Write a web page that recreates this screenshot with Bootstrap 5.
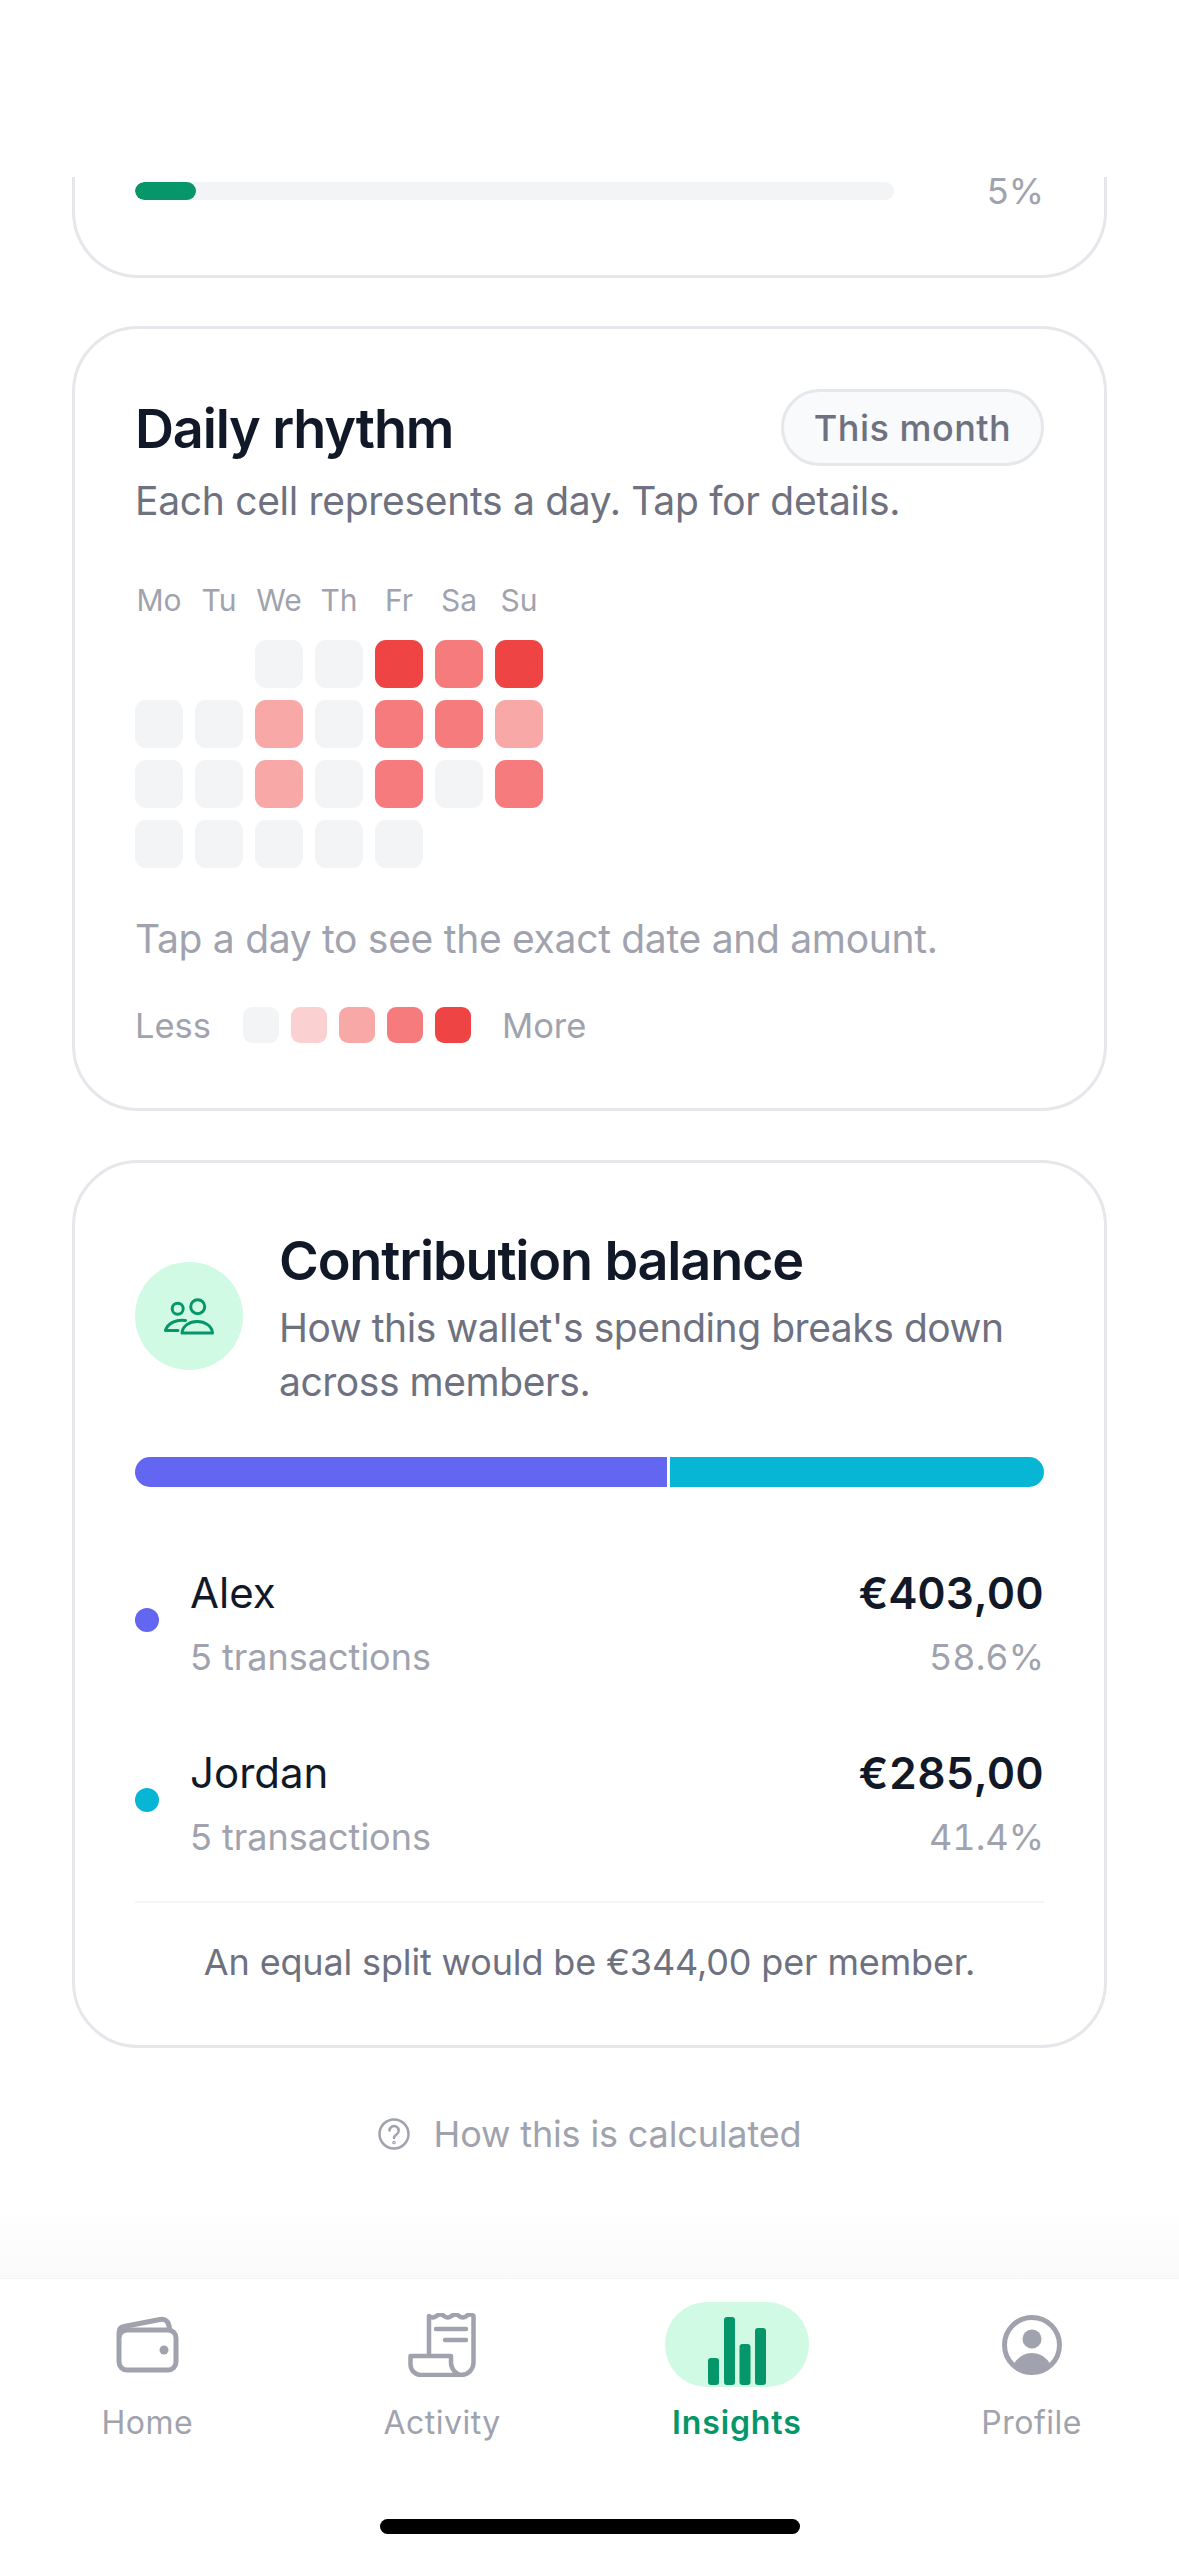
<!DOCTYPE html>
<html lang="en">
<head>
  <meta charset="UTF-8" />
  <meta name="viewport" content="width=device-width, initial-scale=1.0" />
  <title>Insights</title>
  <link href="https://cdn.jsdelivr.net/npm/bootstrap@5.3.0/dist/css/bootstrap.min.css" rel="stylesheet" />
  <style>
    body { font-family: Inter, "Noto Sans", sans-serif; background: #fff; color: #111827; }
    .app-shell { width: 1179px; height: 2556px; overflow: hidden; }
    .top-space { height: 177px; flex: none; }
    .scroll-area { height: 2101px; flex: none; padding: 0 72px; position: relative; }
    .scroll-fade { position: absolute; left: 0; right: 0; bottom: 0; height: 70px; background: linear-gradient(to bottom, rgba(249,250,251,0), #fafafa); }

    .panel { border: 3px solid #e5e7eb; border-radius: 66px; background: #fff; }
    .panel-cut { border-top: 0; border-radius: 0 0 66px 66px; padding: 0 60px; height: 101px; margin-bottom: 48px; }
    .panel-daily { height: 785px; padding: 60px 60px 0; margin-bottom: 49px; }
    .panel-balance { height: 888px; padding: 60px 60px 0; }

    .meter { height: 18px; width: 759px; margin-top: 5px; background: #f3f4f6; border-radius: 9px; overflow: hidden; }
    .meter-fill { height: 100%; background: #059669; border-radius: 9px; }
    .meter-pct { font-size: 36px; line-height: 28px; height: 28px; color: #a0a3ad; }

    .panel-title { font-size: 54px; line-height: 72px; font-weight: 600; letter-spacing: -1.150px; color: #111827; margin: 2px 0 0; }
    .panel-sub { font-size: 39px; line-height: 54px; color: #6e7180; letter-spacing: -.45px; margin: 0; }
    .panel-daily .panel-sub { letter-spacing: -.3px; }
    .range-pill { height: 77px; width: 263px; border: 3px solid #e5e7eb; border-radius: 39px; background: #f9fafb; color: #6e7180; font-size: 36px; font-weight: 500; letter-spacing: .5px; }

    .heat-grid { display: grid; grid-template-columns: repeat(7, 48px); gap: 12px; }
    .heat-days { display: grid; grid-template-columns: repeat(7, 48px); column-gap: 12px; margin-top: 54px; margin-bottom: 22px; }
    .heat-days span { font-size: 30px; line-height: 36px; color: #a0a3ad; text-align: center; }
    .cell { height: 48px; border-radius: 11px; }
    .swatch { width: 36px; height: 36px; border-radius: 9px; }
    .lvl0 { background: #f3f4f6; }
    .lvl1 { background: #fbd0d0; }
    .lvl2 { background: #f9a8a8; }
    .lvl3 { background: #f67b7d; }
    .lvl4 { background: #ef4444; }
    .tap-hint { font-size: 39px; line-height: 54px; color: #a0a3ad; letter-spacing: -.3px; margin: 44px 0 40px; }
    .legend-text { font-size: 34.5px; line-height: 36px; color: #a0a3ad; padding-top: 2px; }
    .legend-less { width: 108px; }
    .legend-swatches { margin-right: 31px; gap: 12px; }

    .people-badge { width: 108px; height: 108px; border-radius: 50%; background: #d1fae5; flex: none; margin-top: 39px; margin-right: 36px; }
    .split-bar { height: 30px; margin-top: 48px; gap: 3px; border-radius: 15px; overflow: hidden; }
    .split-a { background: #6366f1; width: 532px; }
    .split-b { background: #06b6d4; flex: 1; }
    .member-row { height: 117px; }
    .member-first { margin-top: 76px; margin-bottom: 63px; }
    .member-dot { width: 24px; height: 24px; border-radius: 50%; margin-right: 31px; position: relative; top: -2px; }
    .member-name { font-size: 42px; line-height: 60px; color: #111827; }
    .member-sub { font-size: 36px; line-height: 48px; color: #a0a3ad; margin-top: 10px; }
    .member-pct { font-variant-numeric: tabular-nums; }
    .member-amount { font-size: 44px; line-height: 60px; font-weight: 600; color: #111827; font-variant-numeric: tabular-nums; letter-spacing: .2px; }
    .split-note { border-top: 2px solid #f3f4f6; margin-top: 41px; padding-top: 32px; font-size: 36px; line-height: 54px; letter-spacing: -.15px; color: #6e7180; }
    .how-link { margin-top: 59px; font-size: 36px; line-height: 54px; color: #a0a3ad; letter-spacing: -.15px; gap: 24px; }

    .tab-bar { height: 278px; flex: none; background: #fff; border-top: 1px solid #f3f4f6; padding-top: 23px; }
    .tab-item { width: 295px; }
    .tab-slot { width: 144px; height: 85px; border-radius: 42px; }
    .tab-active { background: #d1fae5; }
    .tab-label { font-size: 32px; line-height: 48px; color: #a0a3ad; letter-spacing: .5px; margin-top: 12px; }
    .tab-label-on { color: #059669; font-weight: 600; letter-spacing: .9px; }
    .home-bar { width: 420px; height: 15px; border-radius: 8px; background: #000; margin: 72px auto 0; }
  </style>
</head>
<body>
  <div class="app-shell d-flex flex-column">
    <div class="top-space"></div>

    <div class="scroll-area">
      <!-- card cortada por arriba -->
      <div class="panel panel-cut d-flex justify-content-between">
        <div class="meter"><div class="meter-fill" style="width: 8%"></div></div>
        <div class="meter-pct">5%</div>
      </div>

      <!-- Daily rhythm -->
      <div class="panel panel-daily">
        <div class="d-flex justify-content-between align-items-center">
          <h2 class="panel-title">Daily rhythm</h2>
          <div class="range-pill d-flex align-items-center justify-content-center">This month</div>
        </div>
        <p class="panel-sub mt-2">Each cell represents a day. Tap for details.</p>
        <div class="heat-days">
          <span>Mo</span><span>Tu</span><span>We</span><span>Th</span><span>Fr</span><span>Sa</span><span>Su</span>
        </div>
        <div class="heat-grid" id="heat-grid"></div>
        <p class="tap-hint">Tap a day to see the exact date and amount.</p>
        <div class="d-flex align-items-center">
          <span class="legend-text legend-less">Less</span>
          <div class="d-flex legend-swatches">
            <div class="swatch lvl0"></div><div class="swatch lvl1"></div><div class="swatch lvl2"></div><div class="swatch lvl3"></div><div class="swatch lvl4"></div>
          </div>
          <span class="legend-text">More</span>
        </div>
      </div>

      <!-- Contribution balance -->
      <div class="panel panel-balance">
        <div class="d-flex">
          <div class="people-badge d-flex align-items-center justify-content-center">
            <svg width="50" height="37" viewBox="0 0 50 37" fill="none" stroke="#059669" stroke-width="3" stroke-linecap="round" stroke-linejoin="round">
              <circle cx="13.7" cy="10.7" r="5.5"/>
              <circle cx="33.7" cy="8.7" r="7"/>
              <path d="M18 35H48.5C48 28 41 23.5 33.2 23.5S18.500 28 18 35Z"/>
              <path d="M21.500 22.500C13 21 3.500 25 1.500 32.500H14"/>
            </svg>
          </div>
          <div>
            <h2 class="panel-title">Contribution balance</h2>
            <p class="panel-sub" style="margin-top: 4px">How this wallet's spending breaks down across members.</p>
          </div>
        </div>

        <div class="split-bar d-flex">
          <div class="split-a"></div>
          <div class="split-b"></div>
        </div>

        <div class="member-row member-first d-flex align-items-center">
          <div class="member-dot" style="background: #6366f1"></div>
          <div class="flex-grow-1">
            <div class="member-name">Alex</div>
            <div class="member-sub">5 transactions</div>
          </div>
          <div class="text-end">
            <div class="member-amount">€403,00</div>
            <div class="member-sub member-pct">58.6%</div>
          </div>
        </div>
        <div class="member-row d-flex align-items-center">
          <div class="member-dot" style="background: #06b6d4"></div>
          <div class="flex-grow-1">
            <div class="member-name">Jordan</div>
            <div class="member-sub">5 transactions</div>
          </div>
          <div class="text-end">
            <div class="member-amount">€285,00</div>
            <div class="member-sub member-pct">41.4%</div>
          </div>
        </div>

        <div class="split-note text-center">An equal split would be €344,00 per member.</div>
      </div>

      <div class="how-link d-flex align-items-center justify-content-center">
        <svg width="32" height="32" viewBox="0 0 32 32" fill="none" stroke="#a0a3ad" stroke-width="2.500" stroke-linecap="round">
          <circle cx="16" cy="16" r="14.500"/>
          <path d="M11.500 12.500a4.600 4.600 0 1 1 7 4c-1.700 1-2.500 1.700-2.500 3.500"/>
          <circle cx="16" cy="24.500" r=".6"/>
        </svg>
        <span>How this is calculated</span>
      </div>

      <div class="scroll-fade"></div>
    </div>

    <!-- Barra de navegación inferior -->
    <nav class="tab-bar">
      <div class="d-flex">
        <div class="tab-item d-flex flex-column align-items-center">
          <div class="tab-slot d-flex align-items-center justify-content-center">
            <svg width="63" height="57" viewBox="0 0 63 57" fill="none" stroke="#a0a3ad" stroke-width="5" stroke-linejoin="round" stroke-linecap="round">
              <rect x="3" y="14" width="57" height="40" rx="8"/>
              <path d="M3 20V17C3 13 5 11 8 10.500L44 3.500C50 2.500 53 6 53.500 13"/>
              <circle cx="48" cy="34" r="4.500" fill="#a0a3ad" stroke="none"/>
            </svg>
          </div>
          <div class="tab-label">Home</div>
        </div>
        <div class="tab-item d-flex flex-column align-items-center">
          <div class="tab-slot d-flex align-items-center justify-content-center">
            <svg width="68" height="64" viewBox="0 0 68 64" fill="none" stroke="#a0a3ad" stroke-width="4.500" stroke-linejoin="round" stroke-linecap="round">
              <path d="M21 43V3q3.750 3 7.500 0t7.500 0t7.500 0t7.500 0t7.500 0t7 0V50a12.500 12.500 0 0 1-12.500 12H13a10.500 10.500 0 0 1-10.500-10.500V43H43V50a12.500 12.500 0 0 0 10.500 12"/>
              <path d="M28 16H58M37 27H58"/>
            </svg>
          </div>
          <div class="tab-label">Activity</div>
        </div>
        <div class="tab-item d-flex flex-column align-items-center">
          <div class="tab-slot tab-active d-flex align-items-end justify-content-center">
            <svg width="58" height="69" viewBox="0 0 58 69" fill="#059669" style="margin-bottom: 1px">
              <rect x="0" y="41" width="11" height="27" rx="3"/>
              <rect x="16" y="0" width="11" height="68" rx="3"/>
              <rect x="31.500" y="27" width="11" height="41" rx="3"/>
              <rect x="47" y="11" width="11" height="57" rx="3"/>
            </svg>
          </div>
          <div class="tab-label tab-label-on">Insights</div>
        </div>
        <div class="tab-item d-flex flex-column align-items-center">
          <div class="tab-slot d-flex align-items-center justify-content-center">
            <svg width="60" height="60" viewBox="0 0 60 60" fill="none">
              <circle cx="30" cy="30" r="27.500" stroke="#a0a3ad" stroke-width="5"/>
              <circle cx="30" cy="24" r="9.500" fill="#a0a3ad"/>
              <path d="M11 50Q18 38 30 38T49 50A27 27 0 0 1 11 50Z" fill="#a0a3ad"/>
            </svg>
          </div>
          <div class="tab-label">Profile</div>
        </div>
      </div>
      <div class="home-bar"></div>
    </nav>
  </div>

  <script>
    // Celdas del calendario: -1 = vacía, 0-4 = nivel de gasto
    const days = [
      -1, -1, 0, 0, 4, 3, 4,
      0, 0, 2, 0, 3, 3, 2,
      0, 0, 2, 0, 3, 0, 3,
      0, 0, 0, 0, 0, -1, -1
    ];
    const grid = document.getElementById("heat-grid");
    days.forEach(level => {
      const cell = document.createElement("div");
      cell.className = level < 0 ? "cell" : "cell lvl" + level;
      grid.appendChild(cell);
    });
  </script>
  <script src="https://cdn.jsdelivr.net/npm/bootstrap@5.3.0/dist/js/bootstrap.bundle.min.js"></script>
</body>
</html>
